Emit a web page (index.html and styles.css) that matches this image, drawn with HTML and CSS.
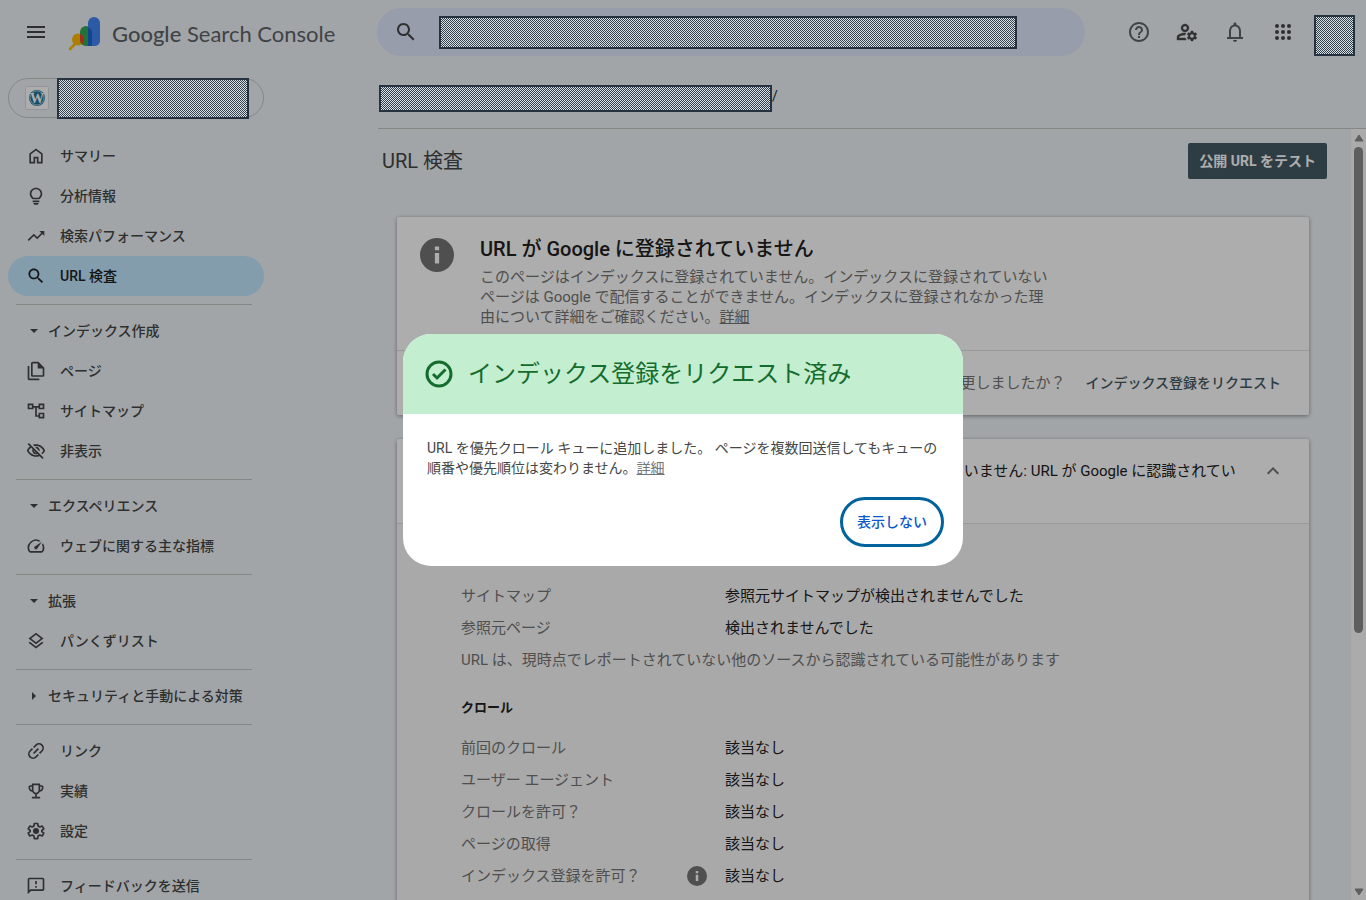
FILE: index.html
```html
<!DOCTYPE html>
<html lang="ja">
<head>
  <meta charset="UTF-8">
  <title>URL 検査 - Google Search Console</title>
  <meta name="viewport" content="width=device-width, initial-scale=1.0">
  <link rel="stylesheet" href="styles.css">
</head>
<body>

  <header class="topbar">
    <div class="brand">
      <button class="icon-btn" aria-label="メニュー">
        <svg class="icon-lg" viewBox="0 0 24 24"><path d="M3 18h18v-2H3v2zm0-5h18v-2H3v2zm0-7v2h18V6H3z"/></svg>
      </button>
      <a class="logo" href="#">
        <svg class="logo-mark" viewBox="0 0 34 34">
          <defs>
            <clipPath id="greenClip"><rect x="12" y="9" width="12" height="20" rx="6"/></clipPath>
          </defs>
          <path d="M2 32l6-6" stroke="#fbbc04" stroke-width="2.6" stroke-linecap="round"/>
          <circle cx="10" cy="22.500" r="6" fill="#fbbc04"/>
          <path d="M12 15a6 6 0 0 1 12 0v14h-6a6 6 0 0 1-6-6z" fill="#34a853"/>
          <path d="M20 6a6 6 0 0 1 12 0v18a5 5 0 0 1-5 5h-7z" fill="#4285f4"/>
          <path d="M20 10.500a6 6 0 0 1 4 5V29h-4z" fill="#1967d2"/>
          <circle cx="10" cy="22.500" r="6" fill="#ea4335" clip-path="url(#greenClip)"/>
        </svg>
        <span class="logo-text"><span class="logo-google">Google</span> Search Console</span>
      </a>
    </div>

    <form class="search">
      <button class="icon-btn" type="button" aria-label="検索">
        <svg class="icon-lg" viewBox="0 0 24 24"><path d="M15.500 14h-.79l-.28-.27C15.410 12.590 16 11.110 16 9.500 16 5.910 13.090 3 9.500 3S3 5.910 3 9.500 5.910 16 9.500 16c1.610 0 3.090-.59 4.230-1.570l.27.28v.79l5 4.990L20.490 19l-4.990-5zm-6 0C7.010 14 5 11.990 5 9.500S7.010 5 9.500 5 14 7.010 14 9.500 11.990 14 9.500 14z"/></svg>
      </button>
      <input class="redacted search-input" type="text" aria-label="URL を検査">
    </form>

    <div class="actions">
      <button class="icon-btn soft" aria-label="ヘルプ">
        <svg class="icon-lg" viewBox="0 0 24 24"><path d="M11 18h2v-2h-2v2zm1-16C6.480 2 2 6.480 2 12s4.480 10 10 10 10-4.480 10-10S17.520 2 12 2zm0 18c-4.410 0-8-3.590-8-8s3.590-8 8-8 8 3.590 8 8-3.590 8-8 8zm0-14c-2.210 0-4 1.790-4 4h2c0-1.100.9-2 2-2s2 .9 2 2c0 2-3 1.750-3 5h2c0-2.250 3-2.500 3-5 0-2.210-1.790-4-4-4z"/></svg>
      </button>
      <button class="icon-btn" aria-label="ユーザー設定">
        <svg class="icon-lg" viewBox="0 0 24 24"><path d="M4 18v-.65c0-.34.16-.66.41-.81C6.1 15.53 8.03 15 10 15c.03 0 .05 0 .08.01.1-.7.3-1.37.59-1.98-.22-.02-.44-.03-.67-.03-2.42 0-4.68.67-6.61 1.82-.88.52-1.39 1.5-1.39 2.53V20h9.26c-.42-.6-.75-1.28-.97-2H4zM10 12c2.21 0 4-1.79 4-4s-1.79-4-4-4-4 1.79-4 4 1.79 4 4 4zm0-6c1.1 0 2 .9 2 2s-.9 2-2 2-2-.9-2-2 .9-2 2-2zM20.75 16c0-.22-.03-.42-.06-.63l1.14-1.01-1-1.73-1.45.49c-.32-.27-.68-.48-1.08-.63L18 11h-2l-.3 1.49c-.4.15-.76.36-1.08.63l-1.45-.49-1 1.73 1.14 1.01c-.03.21-.06.41-.06.63s.03.42.06.63l-1.14 1.01 1 1.73 1.45-.49c.32.27.68.48 1.08.63L16 21h2l.3-1.49c.4-.15.76-.36 1.08-.63l1.45.49 1-1.73-1.14-1.01c.03-.21.06-.41.06-.63zM17 18c-1.1 0-2-.9-2-2s.9-2 2-2 2 .9 2 2-.9 2-2 2z" stroke="currentColor" stroke-width=".4"/></svg>
      </button>
      <button class="icon-btn soft" aria-label="通知">
        <svg class="icon-lg" viewBox="0 0 24 24"><path d="M12 22c1.1 0 2-.9 2-2h-4c0 1.1.9 2 2 2zm6-5v-6c0-3.07-1.63-5.64-4.5-6.32V4c0-.83-.67-1.5-1.5-1.5s-1.500.67-1.500 1.500v.68C7.640 5.360 6 7.920 6 11v6H4v2h16v-2h-2zm-2 0H8v-6c0-2.480 1.510-4.500 4-4.500s4 2.020 4 4.500v6z"/></svg>
      </button>
      <button class="icon-btn" aria-label="Google アプリ">
        <svg class="icon-lg" viewBox="0 0 24 24"><circle cx="6" cy="6" r="2"/><circle cx="12" cy="6" r="2"/><circle cx="18" cy="6" r="2"/><circle cx="6" cy="12" r="2"/><circle cx="12" cy="12" r="2"/><circle cx="18" cy="12" r="2"/><circle cx="6" cy="18" r="2"/><circle cx="12" cy="18" r="2"/><circle cx="18" cy="18" r="2"/></svg>
      </button>
      <div class="redacted avatar"></div>
    </div>
  </header>

  <div class="layout">
    <aside class="sidebar">
      <button class="property" aria-label="プロパティ">
        <span class="favicon">
          <svg viewBox="0 0 18 18">
            <circle cx="9" cy="9" r="8" fill="#1b769c"/>
            <circle cx="9" cy="9" r="7" fill="none" stroke="#fff" stroke-width=".6"/>
            <text x="9" y="14" text-anchor="middle">W</text>
          </svg>
        </span>
        <span class="redacted property-name"></span>
      </button>

      <nav>
        <a class="item" href="#">
          <svg class="icon" viewBox="0 0 24 24"><path d="M6 19h3v-6h6v6h3v-9l-6-4.500L6 10v9zm-2 2V9l8-6 8 6v12h-7v-6h-2v6H4z"/></svg>サマリー</a>
        <a class="item" href="#">
          <svg class="icon" viewBox="0 0 24 24"><path d="M9 21c0 .8.7 1.500 1.500 1.500h3c.8 0 1.500-.7 1.500-1.500v-.5H9zM8 17.500h8v2H8zM12 2C8 2 4.500 5 4.500 9.300c0 2.900 1.700 4.900 3.700 6.700h7.600c2-1.800 3.700-3.800 3.700-6.700C19.500 5 16 2 12 2zm3 12H9c-1.500-1.400-2.500-2.800-2.500-4.700C6.500 6.200 9 4 12 4s5.500 2.200 5.500 5.300c0 1.900-1 3.300-2.500 4.700z"/></svg>分析情報</a>
        <a class="item" href="#">
          <svg class="icon" viewBox="0 0 24 24"><path d="M16 6l2.290 2.290-4.880 4.880-4-4L2 16.590 3.410 18l6-6 4 4 6.300-6.290L22 12V6z"/></svg>検索パフォーマンス</a>
        <a class="item active" href="#">
          <svg class="icon" viewBox="0 0 24 24"><path d="M15.500 14h-.79l-.28-.27C15.410 12.590 16 11.110 16 9.500 16 5.910 13.090 3 9.500 3S3 5.910 3 9.500 5.910 16 9.500 16c1.610 0 3.090-.59 4.230-1.570l.27.28v.79l5 4.990L20.490 19l-4.990-5zm-6 0C7.010 14 5 11.990 5 9.500S7.010 5 9.500 5 14 7.010 14 9.500 11.990 14 9.500 14z"/></svg>URL 検査</a>
        <hr>
        <button class="group"><svg class="caret" viewBox="0 0 8 8"><path d="M0 2h8L4 6z"/></svg>インデックス作成</button>
        <a class="item" href="#">
          <svg class="icon" viewBox="0 0 24 24"><path d="M15 1H8c-1.100 0-2 .9-2 2v14c0 1.100.9 2 2 2h12c1.100 0 2-.9 2-2V8l-7-7zm5 16H8V3h6v6h6v8zM4 6H2v15c0 1.100.9 2 2 2h12v-2H4z"/></svg>ページ</a>
        <a class="item" href="#">
          <svg class="icon" viewBox="0 0 24 24"><path d="M22 10V3h-7v3H9V3H2v7h7V8h2v11h4v2h7v-7h-7v3h-2V8h2v2h7zM7 8H4V5h3v3zm10 8h3v3h-3v-3zm0-11h3v3h-3V5z"/></svg>サイトマップ</a>
        <a class="item" href="#">
          <svg class="icon" viewBox="0 0 24 24"><path d="M12 6c3.79 0 7.17 2.13 8.82 5.5-.59 1.22-1.42 2.27-2.41 3.12l1.41 1.41c1.39-1.23 2.49-2.77 3.18-4.53C21.27 7.11 17 4 12 4c-1.27 0-2.49.2-3.64.57l1.65 1.65C10.66 6.09 11.32 6 12 6zm-1.07 1.14L13 9.21c.57.25 1.03.71 1.28 1.28l2.07 2.07c.08-.34.14-.7.14-1.07C16.5 9.01 14.48 7 12 7c-.37 0-.72.05-1.07.14zM2.01 3.87l2.68 2.68C3.06 7.83 1.77 9.53 1 11.5 2.73 15.89 7 19 12 19c1.52 0 2.98-.29 4.32-.82l3.42 3.42 1.41-1.41L3.42 2.45 2.01 3.87zm7.5 7.5l2.61 2.61c-.04.01-.08.02-.12.02-1.38 0-2.5-1.12-2.5-2.5 0-.05.01-.08.01-.13zm-3.4-3.4l1.75 1.75c-.23.55-.36 1.15-.36 1.78 0 2.48 2.02 4.5 4.5 4.5.63 0 1.23-.13 1.77-.36l.98.98c-.88.24-1.8.38-2.75.38-3.79 0-7.17-2.13-8.82-5.5.7-1.43 1.72-2.61 2.93-3.53z"/></svg>非表示</a>
        <hr>
        <button class="group"><svg class="caret" viewBox="0 0 8 8"><path d="M0 2h8L4 6z"/></svg>エクスペリエンス</button>
        <a class="item" href="#">
          <svg class="icon" viewBox="0 0 24 24"><path d="M20.38 8.57l-1.23 1.85a8 8 0 0 1-.22 7.58H5.07A8 8 0 0 1 15.58 6.85l1.85-1.23A10 10 0 0 0 3.35 19a2 2 0 0 0 1.72 1h13.85a2 2 0 0 0 1.74-1 10 10 0 0 0-.27-10.44zm-9.79 6.84a2 2 0 0 0 2.83 0l5.66-8.49-8.49 5.66a2 2 0 0 0 0 2.83z"/></svg>ウェブに関する主な指標</a>
        <hr>
        <button class="group"><svg class="caret" viewBox="0 0 8 8"><path d="M0 2h8L4 6z"/></svg>拡張</button>
        <a class="item" href="#">
          <svg class="icon" viewBox="0 0 24 24"><path d="M11.990 18.540l-7.370-5.730L3 14.070l9 7 9-7-1.630-1.270-7.380 5.740zM12 16l7.360-5.730L21 9l-9-7-9 7 1.630 1.270L12 16zm0-11.470L17.740 9 12 13.470 6.260 9 12 4.530z"/></svg>パンくずリスト</a>
        <hr>
        <button class="group"><svg class="caret" viewBox="0 0 8 8"><path d="M2 0v8l4-4z"/></svg>セキュリティと手動による対策</button>
        <hr>
        <a class="item" href="#">
          <svg class="icon" viewBox="0 0 24 24"><g transform="rotate(-45 12 12)" fill="none" stroke="currentColor" stroke-width="2"><path d="M11 7H7a5 5 0 0 0 0 10h4M13 7h4a5 5 0 0 1 0 10h-4M8 12h8"/></g></svg>リンク</a>
        <a class="item" href="#">
          <svg class="icon" viewBox="0 0 24 24"><path d="M19 5h-2V3H7v2H5c-1.100 0-2 .9-2 2v1c0 2.550 1.920 4.630 4.390 4.940.63 1.500 1.980 2.630 3.610 2.960V19H7v2h10v-2h-4v-3.100c1.630-.33 2.980-1.460 3.610-2.960C19.080 12.630 21 10.550 21 8V7c0-1.100-.9-2-2-2zM5 8V7h2v3.820C5.840 10.400 5 9.300 5 8zm7 6c-1.650 0-3-1.350-3-3V5h6v6c0 1.650-1.350 3-3 3zm7-6c0 1.300-.84 2.400-2 2.820V7h2v1z"/></svg>実績</a>
        <a class="item" href="#">
          <svg class="icon" viewBox="0 0 24 24"><path d="M10 3h4l.5 3 2 1.200 2.900-1.100 2 3.400L19 11.400v1.300l2.400 1.900-2 3.400-2.900-1.100-2 1.200-.5 3h-4l-.5-3-2-1.200-2.900 1.100-2-3.400L5 12.700v-1.300L2.600 9.500l2-3.400 2.900 1.100 2-1.200z" fill="none" stroke="currentColor" stroke-width="2" stroke-linejoin="round"/><circle cx="12" cy="12" r="3.600"/></svg>設定</a>
        <hr>
        <a class="item" href="#">
          <svg class="icon" viewBox="0 0 24 24"><path d="M20 2H4c-1.100 0-2 .9-2 2v18l4-4h14c1.100 0 2-.9 2-2V4c0-1.100-.9-2-2-2zm0 14H5.170L4 17.170V4h16v12zm-9-4h2v2h-2zm0-6h2v4h-2z"/></svg>フィードバックを送信</a>
      </nav>
    </aside>

    <main class="main">
      <div class="url-row"><span class="redacted url-name"></span><span>/</span></div>

      <div class="scroller">
        <div class="content">
          <div class="toolbar">
            <h1>URL 検査</h1>
            <button class="test-btn">公開 URL をテスト</button>
          </div>

          <section class="card">
            <div class="verdict">
              <svg class="info-lg" viewBox="0 0 24 24"><circle cx="12" cy="12" r="12"/><path d="M10.500 10.500h3V18h-3zM10.500 6h3v2.600h-3z" fill="#fff"/></svg>
              <div>
                <h2>URL が Google に登録されていません</h2>
                <p>このページはインデックスに登録されていません。インデックスに登録されていないページは Google で配信することができません。インデックスに登録されなかった理由について詳細をご確認ください。<a href="#">詳細</a></p>
              </div>
            </div>
            <div class="card-foot">
              <span>ページを変更しましたか？</span>
              <button class="text-btn">インデックス登録をリクエスト</button>
            </div>
          </section>

          <section class="card">
            <div class="panel-head">
              <span class="panel-label">ページのインデックス登録</span>
              <span class="panel-status">ページはインデックスに登録されていません: URL が Google に認識されていません</span>
              <button class="chevron" aria-label="閉じる">
                <svg class="icon-lg" viewBox="0 0 24 24"><path d="M12 8l-6 6 1.410 1.410L12 10.830l4.590 4.580L18 14z"/></svg>
              </button>
            </div>
            <div class="panel-body">
              <h3>検出</h3>
              <table>
                <tr><th class="key">サイトマップ</th><td>参照元サイトマップが検出されませんでした</td></tr>
                <tr><th>参照元ページ</th><td>検出されませんでした</td></tr>
                <tr><th colspan="2">URL は、現時点でレポートされていない他のソースから認識されている可能性があります</th></tr>
              </table>
              <h3>クロール</h3>
              <table>
                <tr><th class="key">前回のクロール</th><td>該当なし</td></tr>
                <tr><th>ユーザー エージェント</th><td>該当なし</td></tr>
                <tr><th>クロールを許可？</th><td>該当なし</td></tr>
                <tr><th>ページの取得</th><td>該当なし</td></tr>
                <tr>
                  <th><span class="with-info">インデックス登録を許可？<svg class="info-sm" viewBox="0 0 24 24"><circle cx="12" cy="12" r="12"/><path d="M10.500 10.500h3V18h-3zM10.500 6h3v2.600h-3z" fill="#fff"/></svg></span></th>
                  <td>該当なし</td>
                </tr>
              </table>
            </div>
          </section>
        </div>

        <div class="scrollbar">
          <svg class="arrow" viewBox="0 0 10 8"><path d="M5 1l4 6H1z" stroke="#8b8b8b" stroke-linejoin="round"/></svg>
          <div class="track"><div class="thumb"></div></div>
          <svg class="arrow" viewBox="0 0 10 8"><path d="M5 7l4-6H1z" stroke="#8b8b8b" stroke-linejoin="round"/></svg>
        </div>
      </div>
    </main>
  </div>

  <div class="overlay"></div>

  <div class="dialog-wrap">
    <div class="dialog" role="dialog" aria-labelledby="dialogTitle">
      <div class="dialog-head">
        <svg class="check" viewBox="0 0 28 28"><circle cx="14" cy="14" r="12"/><path d="M8 14l4 4 8.500-8.500"/></svg>
        <h2 id="dialogTitle">インデックス登録をリクエスト済み</h2>
      </div>
      <p>URL を優先クロール キューに追加しました。 ページを複数回送信してもキューの順番や優先順位は変わりません。<a href="#">詳細</a></p>
      <div class="dialog-actions">
        <button class="dismiss">表示しない</button>
      </div>
    </div>
  </div>

</body>
</html>
```
FILE: styles.css
```css
* {
  box-sizing: border-box;
}

body {
  margin: 0;
  height: 100vh;
  overflow: hidden;
  display: flex;
  flex-direction: column;
  background-color: #eff4f8;
  color: #444746;
  font-family: Roboto, "Noto Sans CJK JP", sans-serif;
  font-size: 14px;
  line-height: 20px;
}

button {
  padding: 0;
  border: none;
  background: none;
  color: inherit;
  font: inherit;
  cursor: pointer;
}

a {
  color: inherit;
}

h1, h2, h3, p {
  margin: 0;
}

svg {
  display: block;
  flex: none;
  fill: currentColor;
}

.icon {
  width: 20px;
  height: 20px;
}

.icon-lg {
  width: 24px;
  height: 24px;
}

/* hidden names; they stay above the dimming layer */
.redacted {
  position: relative;
  z-index: 20;
  display: block;
  border: 2px solid #26323f;
  background: repeating-conic-gradient(#35414c 0 25%, #d6dfe4 0 50%) 0 0 / 2px 2px;
}

/* Top bar */
.topbar {
  display: flex;
  flex: none;
  align-items: center;
  height: 64px;
}

.brand {
  display: flex;
  align-items: center;
  flex: none;
  width: 377px;
  padding-left: 12px;
}

.icon-btn {
  display: flex;
  align-items: center;
  justify-content: center;
  width: 48px;
  height: 48px;
}

.icon-btn.soft {
  color: #5f6368;
}

.logo {
  display: flex;
  align-items: center;
  gap: 10px;
  padding: 4px 0 0 8px;
  text-decoration: none;
}

.logo-mark {
  width: 34px;
  height: 34px;
}

.logo-text {
  color: #5f6368;
  font-family: Lato, sans-serif;
  font-size: 22px;
  white-space: nowrap;
}

.logo-google {
  font-weight: 500;
}

.search {
  display: flex;
  align-items: center;
  flex: 1;
  height: 48px;
  padding: 0 68px 0 5px;
  border-radius: 24px;
  background-color: #dfe7fb;
}

.search-input {
  flex: 1;
  min-width: 0;
  height: 33px;
  margin-left: 9px;
}

.actions {
  display: flex;
  align-items: center;
  flex: none;
  padding: 0 11px 0 30px;
}

.avatar {
  width: 41px;
  height: 41px;
  margin: 6px 0 0 7px;
}

.layout {
  display: flex;
  flex: 1;
  min-height: 0;
}

/* Sidebar */
.sidebar {
  flex: none;
  width: 378px;
  padding: 14px 0 0 8px;
  overflow: hidden;
}

.property {
  display: flex;
  align-items: center;
  width: 256px;
  height: 40px;
  margin-bottom: 18px;
  padding-left: 16px;
  border: 1px solid #c4c7c5;
  border-radius: 20px;
}

.favicon {
  flex: none;
  width: 24px;
  height: 24px;
  padding: 2px;
  border: 1px solid #dadce0;
  border-radius: 2px;
  background-color: #fff;
}

.favicon text {
  fill: #fff;
  font-family: "Liberation Serif", serif;
  font-size: 14px;
  font-weight: bold;
}

.property-name {
  width: 192px;
  height: 41px;
  margin-left: 8px;
}

.item,
.group {
  display: flex;
  align-items: center;
  width: 256px;
  height: 40px;
  font-weight: 500;
  white-space: nowrap;
}

.item {
  gap: 14px;
  padding-left: 18px;
  border-radius: 20px;
  text-decoration: none;
}

.item.active {
  background-color: #c2e7ff;
  color: #1f1f1f;
}

.group {
  gap: 10px;
  padding-left: 22px;
}

.caret {
  width: 8px;
  height: 8px;
}

nav hr {
  width: 236px;
  margin: 8px 0 6px 8px;
  border: none;
  border-top: 1px solid #c4c7c5;
}

/* Main */
.main {
  display: flex;
  flex: 1;
  flex-direction: column;
  min-width: 0;
}

.url-row {
  display: flex;
  flex: none;
  align-items: center;
  height: 65px;
  padding-left: 1px;
  border-bottom: 1px solid #c4c7c5;
  color: #1f1f1f;
}

.url-name {
  width: 393px;
  height: 27px;
  margin-top: 4px;
}

.scroller {
  display: flex;
  flex: 1;
  min-height: 0;
}

.content {
  flex: 1;
  min-width: 0;
  padding: 0 42px 0 19px;
  overflow: hidden;
}

.toolbar {
  display: flex;
  align-items: center;
  justify-content: space-between;
  height: 64px;
  margin: 0 -18px 24px -15px;
}

h1 {
  font-size: 20px;
  font-weight: 400;
}

.test-btn {
  height: 36px;
  padding: 0 11px;
  border-radius: 2px;
  background-color: #455a64;
  color: #fff;
  font-weight: 700;
}

.card {
  margin-bottom: 24px;
  border-radius: 2px;
  background-color: #fff;
  color: #757575;
  font-size: 15px;
  box-shadow: 0 1px 4px rgba(0, 0, 0, 0.4);
}

.verdict {
  display: flex;
  gap: 26px;
  padding: 18px 24px 23px 23px;
}

.verdict h2 {
  margin-bottom: 4px;
  color: #212121;
  font-size: 20px;
  font-weight: 500;
  line-height: 28px;
}

.verdict p {
  max-width: 572px;
}

.info-lg {
  width: 34px;
  height: 34px;
  margin-top: 3px;
}

.card-foot {
  display: flex;
  align-items: center;
  justify-content: flex-end;
  gap: 20px;
  height: 65px;
  padding-right: 28px;
  border-top: 1px solid #e0e0e0;
}

.text-btn {
  color: #455a64;
  font-size: 14px;
  font-weight: 500;
}

.panel-head {
  display: flex;
  align-items: flex-start;
  padding: 22px 24px 22px 64px;
  border-bottom: 1px solid #e0e0e0;
  color: #212121;
}

.panel-label {
  flex: none;
  width: 264px;
}

.panel-status {
  flex: 1;
  max-width: 516px;
}

.chevron {
  margin: -2px 0 0 auto;
  color: #757575;
}

.panel-body {
  padding: 16px 64px 64px;
  background-color: #fafafa;
}

h3 {
  margin-bottom: 8px;
  color: #212121;
  font-size: 13px;
  font-weight: 700;
  line-height: 32px;
}

table {
  width: 100%;
  margin-bottom: 16px;
  border-collapse: collapse;
  table-layout: fixed;
}

th, td {
  height: 32px;
  padding: 0;
  font-weight: 400;
  text-align: left;
}

.key {
  width: 264px;
}

td {
  color: #212121;
}

.with-info {
  display: flex;
  align-items: center;
  justify-content: space-between;
  padding-right: 18px;
}

.info-sm {
  width: 20px;
  height: 20px;
}

.scrollbar {
  display: flex;
  flex: none;
  flex-direction: column;
  align-items: center;
  width: 15px;
  padding: 5px 0 4px;
  background-color: #fcfcfc;
  color: #8b8b8b;
}

.arrow {
  width: 10px;
  height: 8px;
}

.track {
  flex: 1;
  padding: 5px 0;
}

.thumb {
  width: 9px;
  height: 66%;
  border-radius: 5px;
  background-color: #8b8b8b;
}

/* Dialog */
.overlay {
  position: fixed;
  inset: 0;
  z-index: 10;
  background-color: rgba(0, 0, 0, 0.32);
}

.dialog-wrap {
  position: fixed;
  inset: 0;
  z-index: 15;
  display: flex;
  align-items: center;
  justify-content: center;
}

.dialog {
  width: 560px;
  overflow: hidden;
  border-radius: 28px;
  background-color: #fff;
}

.dialog-head {
  display: flex;
  align-items: center;
  gap: 15px;
  height: 80px;
  padding: 0 22px;
  background-color: #c4eed0;
  color: #146c2e;
}

.dialog-head h2 {
  font-size: 24px;
  font-weight: 400;
}

.check {
  width: 28px;
  height: 28px;
  fill: none;
  stroke: currentColor;
  stroke-width: 3;
}

.dialog p {
  padding: 24px 24px 0;
}

.dialog p a {
  color: #757575;
}

.dialog-actions {
  display: flex;
  justify-content: flex-end;
  padding: 19px;
}

.dismiss {
  height: 50px;
  padding: 0 14px;
  border: 3px solid #00639b;
  border-radius: 25px;
  color: #0b57d0;
  font-weight: 500;
}
```
